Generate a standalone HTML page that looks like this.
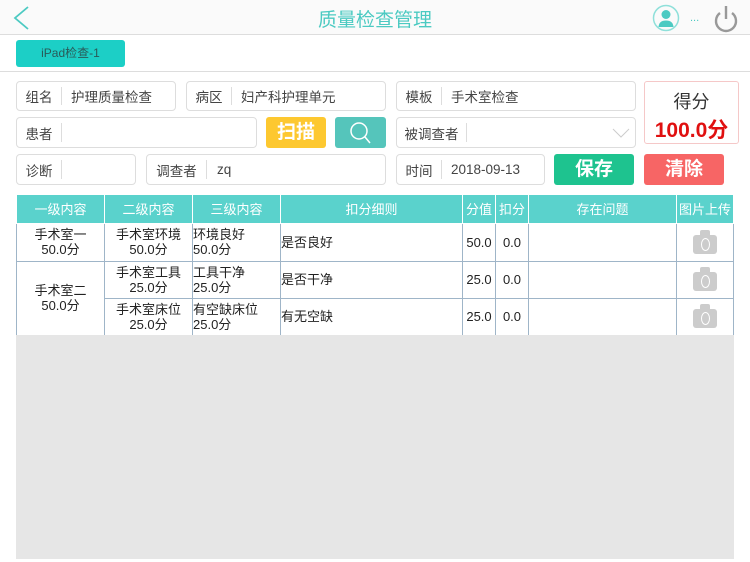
<!DOCTYPE html>
<html><head><meta charset="utf-8"><style>
*{margin:0;padding:0;box-sizing:border-box}
body{width:750px;height:562px;background:#fff;position:relative;overflow:hidden;font-family:"Liberation Sans","Noto Sans CJK SC",sans-serif;color:#333}
.a{position:absolute}
.hdr{left:0;top:0;width:750px;height:35px;background:#fafafa;border-bottom:1px solid #ddd}
.title{left:0;width:750px;top:5px;text-align:center;font-size:19px;color:#4ccac2}
.tab{left:16px;top:40px;width:109px;height:27px;background:#1ccfc6;border-radius:3px;font-size:12px;color:#2a5a58;text-align:center;line-height:27px}
.line{left:0;top:71px;width:750px;height:1px;background:#ddd}
.f{border:1px solid #ddd;border-radius:4px;background:#fff;font-size:13.5px;color:#444}
.f .l{position:absolute;left:0;top:5px;bottom:5px;width:45px;border-right:1px solid #ddd;display:flex;align-items:center;justify-content:center}
.f .v{position:absolute;left:54px;top:0;bottom:0;display:flex;align-items:center}
.btn{border-radius:3px;color:#fff;font-size:19px;font-weight:bold;text-align:center}
table{position:absolute;left:16px;top:195px;width:718px;border-collapse:collapse;font-size:13px;color:#222}
th{background:#5ad2cc;color:#fff;font-weight:normal;height:28px;border:1px solid #fff;border-top:0;font-size:13px}
td{border:1px solid #9fb5c8;text-align:center;line-height:15px;background:#fff}
td.lft{text-align:left}
.gray{left:16px;top:335px;width:718px;height:224px;background:#e6e6e6}
.cam{display:inline-block;width:24px;height:19px;background:#ccc;border-radius:3px;position:relative;vertical-align:middle;margin-top:4px}
.cam:before{content:"";position:absolute;left:7px;top:-5px;width:10px;height:6px;background:#ccc;border-radius:2px 2px 0 0}
.cam:after{content:"";position:absolute;left:8px;top:3px;width:7px;height:11px;border:1.5px solid #fff;border-radius:50%}
</style></head><body>
<div class="a hdr"></div>
<svg class="a" style="left:9px;top:5px" width="24" height="26"><path d="M19 2 L6 13 L19 24" fill="none" stroke="#4ccac2" stroke-width="1.8"/></svg>
<div class="a title">质量检查管理</div>
<svg class="a" style="left:652px;top:4px" width="28" height="28"><circle cx="14" cy="14" r="12.5" fill="none" stroke="#8fe0da" stroke-width="1.5"/><circle cx="14" cy="10.5" r="4.5" fill="#4ccac2"/><path d="M6.5 23 Q7 16.5 14 16.5 Q21 16.5 21.5 23 Z" fill="#4ccac2"/></svg>
<div class="a" style="left:690px;top:12px;font-size:11px;color:#4ccac2">...</div>
<svg class="a" style="left:712px;top:4px" width="28" height="30"><path d="M8 9 A10 10 0 1 0 20 9" fill="none" stroke="#999" stroke-width="2.4"/><line x1="14" y1="2" x2="14" y2="15" stroke="#999" stroke-width="2.4"/></svg>
<div class="a tab">iPad检查-1</div>
<div class="a line"></div>

<div class="a f" style="left:16px;top:81px;width:160px;height:30px"><div class="l">组名</div><div class="v">护理质量检查</div></div>
<div class="a f" style="left:186px;top:81px;width:200px;height:30px"><div class="l">病区</div><div class="v">妇产科护理单元</div></div>
<div class="a f" style="left:396px;top:81px;width:240px;height:30px"><div class="l">模板</div><div class="v">手术室检查</div></div>
<div class="a" style="left:644px;top:81px;width:95px;height:63px;border:1px solid #f5c8c8;border-radius:3px;text-align:center">
<div style="font-size:18px;color:#333;margin-top:6px">得分</div><div style="font-size:21px;color:#e01010;font-weight:bold;margin-top:0px">100.0分</div></div>

<div class="a f" style="left:16px;top:117px;width:241px;height:31px"><div class="l">患者</div></div>
<div class="a btn" style="left:266px;top:117px;width:60px;height:31px;background:#fdc830;line-height:31px">扫描</div>
<div class="a btn" style="left:335px;top:117px;width:51px;height:31px;background:#55c5bb"><svg width="51" height="31"><circle cx="24" cy="14" r="8" fill="none" stroke="#fff" stroke-width="1.5"/><line x1="30" y1="20" x2="35" y2="26" stroke="#fff" stroke-width="1.5"/></svg></div>
<div class="a f" style="left:396px;top:117px;width:240px;height:31px"><div class="l" style="width:70px">被调查者</div><svg class="a" style="left:215px;top:9px" width="18" height="12"><path d="M1 2 L9 10 L17 2" fill="none" stroke="#ccc" stroke-width="1"/></svg></div>

<div class="a f" style="left:16px;top:154px;width:120px;height:31px"><div class="l">诊断</div></div>
<div class="a f" style="left:146px;top:154px;width:240px;height:31px"><div class="l" style="width:60px">调查者</div><div class="v" style="left:70px">zq</div></div>
<div class="a f" style="left:396px;top:154px;width:149px;height:31px"><div class="l">时间</div><div class="v">2018-09-13</div></div>
<div class="a btn" style="left:554px;top:154px;width:80px;height:31px;background:#1ec38f;line-height:31px">保存</div>
<div class="a btn" style="left:644px;top:154px;width:80px;height:31px;background:#f76565;line-height:31px">清除</div>

<table>
<tr><th style="width:88px">一级内容</th><th style="width:88px">二级内容</th><th style="width:88px">三级内容</th><th style="width:182px">扣分细则</th><th style="width:33px">分值</th><th style="width:33px">扣分</th><th style="width:148px">存在问题</th><th>图片上传</th></tr>
<tr style="height:38px"><td>手术室一<br>50.0分</td><td>手术室环境<br>50.0分</td><td class="lft">环境良好<br>50.0分</td><td class="lft">是否良好</td><td>50.0</td><td>0.0</td><td></td><td><span class="cam"></span></td></tr>
<tr style="height:37px"><td rowspan="2">手术室二<br>50.0分</td><td>手术室工具<br>25.0分</td><td class="lft">工具干净<br>25.0分</td><td class="lft">是否干净</td><td>25.0</td><td>0.0</td><td></td><td><span class="cam"></span></td></tr>
<tr style="height:37px"><td>手术室床位<br>25.0分</td><td class="lft">有空缺床位<br>25.0分</td><td class="lft">有无空缺</td><td>25.0</td><td>0.0</td><td></td><td><span class="cam"></span></td></tr>
</table>
<div class="a gray"></div>
</body></html>
